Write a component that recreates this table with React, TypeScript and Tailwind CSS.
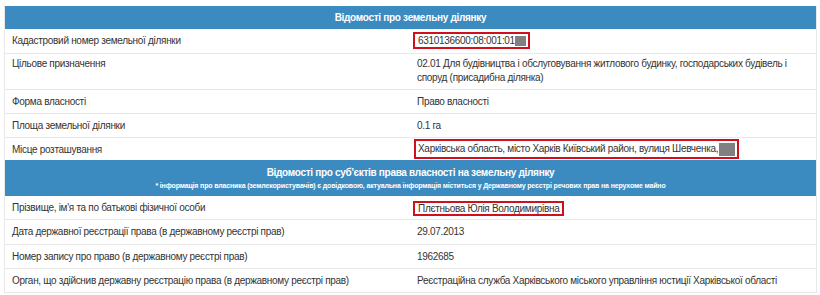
import React from "react";

const Row = ({ label, children, h = "h-[24px]", pt = "pt-[5px]" }: { label: string; children: React.ReactNode; h?: string; pt?: string }) => (
  <div className={`flex border-t border-[#e8e8e8] ${h}`}>
    <div className={`w-[405px] pl-[7px] ${pt}`}>{label}</div>
    <div className={`flex-1 pl-[7px] pr-[20px] ${pt}`}>{children}</div>
  </div>
);

export default function App() {
  return (
    <div className="w-[820px] h-[295px] bg-white pt-[6px] pl-[4px] pr-[3px] text-[10px] leading-[14px] tracking-[-0.3px] text-[#333]" style={{ fontFamily: '"Liberation Sans", Arial, sans-serif' }}>
      <div className="border-l border-r border-b border-[#e8e8e8]">
        <div className="h-[23px] bg-[#3b8bc0] text-white font-bold flex items-center justify-center">Відомості про земельну ділянку</div>
        <div className="flex h-[24px]">
          <div className="w-[405px] pl-[7px] pt-[5px]">Кадастровий номер земельної ділянки</div>
          <div className="flex-1 pl-[3px] pt-[3px]">
            <span className="inline-flex items-center border-2 border-[#d0101c] pl-[3px] pr-[2px] h-[17px]">
              6310136600:08:001:01
              <span className="inline-block w-[11px] h-[10px] bg-[#808080]" />
            </span>
          </div>
        </div>
        <Row label="Цільове призначення" h="h-[36px]" pt="pt-[3px]">
          02.01 Для будівництва і обслуговування житлового будинку, господарських будівель і споруд (присадибна ділянка)
        </Row>
        <Row label="Форма власності">Право власності</Row>
        <Row label="Площа земельної ділянки">0.1 га</Row>
        <div className="flex border-t border-[#e8e8e8] h-[23px]">
          <div className="w-[405px] pl-[7px] pt-[5px]">Місце розташування</div>
          <div className="flex-1 pl-[4px] pt-[1px]">
            <span className="inline-flex items-center border-2 border-[#d0101c] pl-[2px] pr-[2px] h-[20px]">
              Харківська область, місто Харків Київський район, вулиця Шевченка,
              <span className="inline-block w-[16px] h-[13px] bg-[#808080] ml-[1px]" />
            </span>
          </div>
        </div>
        <div className="h-[36px] bg-[#3b8bc0] text-white font-bold flex flex-col items-center justify-center pt-[1px]">
          <div className="leading-[14px]">Відомості про суб'єктів права власності на земельну ділянку</div>
          <div className="text-[7px] leading-[10px] tracking-[-0.15px] mt-[1px]">* інформація про власника (землекористувачів) є довідковою, актуальна інформація міститься у Державному реєстрі речових прав на нерухоме майно</div>
        </div>
        <div className="flex h-[23px]">
          <div className="w-[405px] pl-[7px] pt-[5px]">Прізвище, ім'я та по батькові фізичної особи</div>
          <div className="flex-1 pl-[3px] pt-[5px]">
            <span className="inline-flex items-center border-2 border-[#d0101c] pl-[3px] pr-[3px] h-[15px]">Плєтньова Юлія Володимирівна</span>
          </div>
        </div>
        <Row label="Дата державної реєстрації права (в державному реєстрі прав)" h="h-[25px]">29.07.2013</Row>
        <Row label="Номер запису про право (в державному реєстрі прав)">1962685</Row>
        <Row label="Орган, що здійснив державну реєстрацію права (в державному реєстрі прав)">Реєстраційна служба Харківського міського управління юстиції Харківської області</Row>
      </div>
    </div>
  );
}
